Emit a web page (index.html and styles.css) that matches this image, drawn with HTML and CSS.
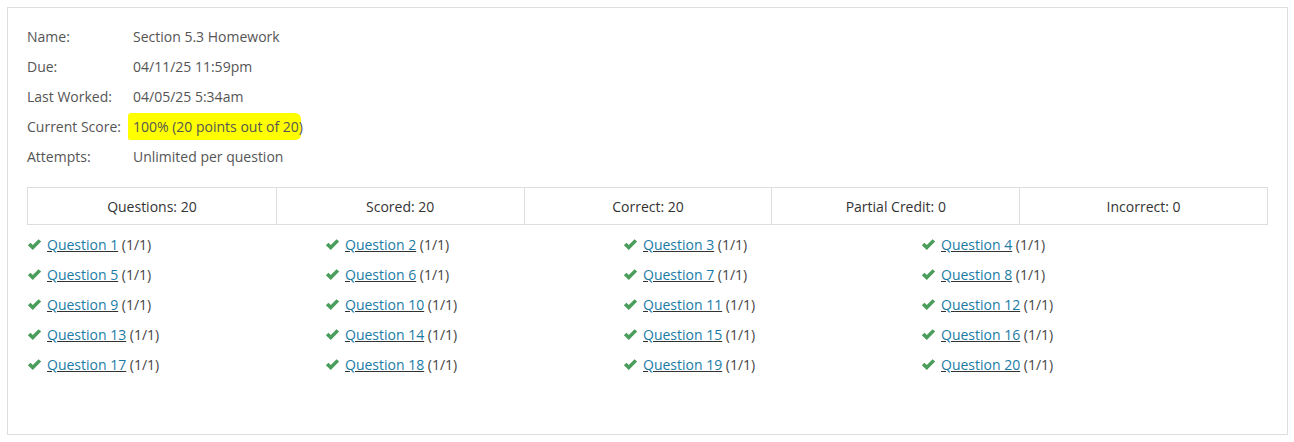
FILE: index.html
```html
<!DOCTYPE html>
<html>
<head>
<meta charset="utf-8">
<link rel="stylesheet" href="styles.css">
</head>
<body>
<div class="panel">
  <dl class="info">
    <div class="info-row"><dt>Name:</dt><dd>Section 5.3 Homework</dd></div>
    <div class="info-row"><dt>Due:</dt><dd>04/11/25 11:59pm</dd></div>
    <div class="info-row"><dt>Last Worked:</dt><dd>04/05/25 5:34am</dd></div>
    <div class="info-row"><dt>Current Score:</dt><dd><span class="hl">100% (20 points out of 20</span>)</dd></div>
    <div class="info-row"><dt>Attempts:</dt><dd>Unlimited per question</dd></div>
  </dl>
  <div class="summary">
    <div class="cell">Questions: 20</div>
    <div class="cell">Scored: 20</div>
    <div class="cell">Correct: 20</div>
    <div class="cell">Partial Credit: 0</div>
    <div class="cell">Incorrect: 0</div>
  </div>
  <div class="questions" id="q"></div>
</div>
<script src="app.js"></script>
</body>
</html>
```
FILE: app.js
```js
var q = document.getElementById('q');
for (var i = 1; i <= 20; i++) {
  var d = document.createElement('div');
  d.className = 'qitem';
  d.innerHTML = '<svg class="check" viewBox="0 0 14 12" width="15" height="13"><path d="M0.8 6.6 L3.2 4.3 L5.4 6.5 L10.8 1 L13.2 3.3 L5.4 11.2 Z" fill="#4a9d5b"/></svg>' +
    '<a href="#">Question ' + i + '</a> (1/1)';
  q.appendChild(d);
}
```
FILE: styles.css
```css
html, body { margin: 0; padding: 0; background: #fff; }
body {
  font-family: "Open Sans", "Liberation Sans", sans-serif;
  font-size: 14px;
  color: #555;
  padding: 7px 6px 7px 7px;
}
.panel {
  border: 1px solid #dedede;
  height: 428px;
  box-sizing: border-box;
  padding: 13px 19px 0 19px;
}
.info { margin: 0; }
.info-row {
  display: flex;
  height: 30px;
  align-items: center;
}
.info dt { width: 106px; margin: 0; }
.info dd { margin: 0; position: relative; z-index: 0; }
.hl { position: relative; }
.hl::before {
  content: "";
  position: absolute;
  left: -5px; right: -2px; top: -4px; bottom: -4px;
  background: #ffff00;
  border-radius: 3px 6px 5px 2px;
  z-index: -1;
}
.summary {
  margin-top: 16px;
  display: grid;
  grid-template-columns: repeat(5, 1fr);
  border: 1px solid #dedede;
  color: #333;
}
.cell {
  height: 36px;
  display: flex;
  align-items: center;
  justify-content: center;
  border-left: 1px solid #dedede;
}
.cell:first-child { border-left: none; }
.questions {
  margin-top: 4px;
  display: grid;
  grid-template-columns: repeat(4, 298px);
  color: #444;
}
.qitem {
  height: 30px;
  display: flex;
  align-items: center;
  white-space: pre;
}
.check { margin-right: 5px; flex: none; }
.qitem a {
  color: #1a7ba5;
  text-decoration: underline;
  text-decoration-color: #333;
}
```
